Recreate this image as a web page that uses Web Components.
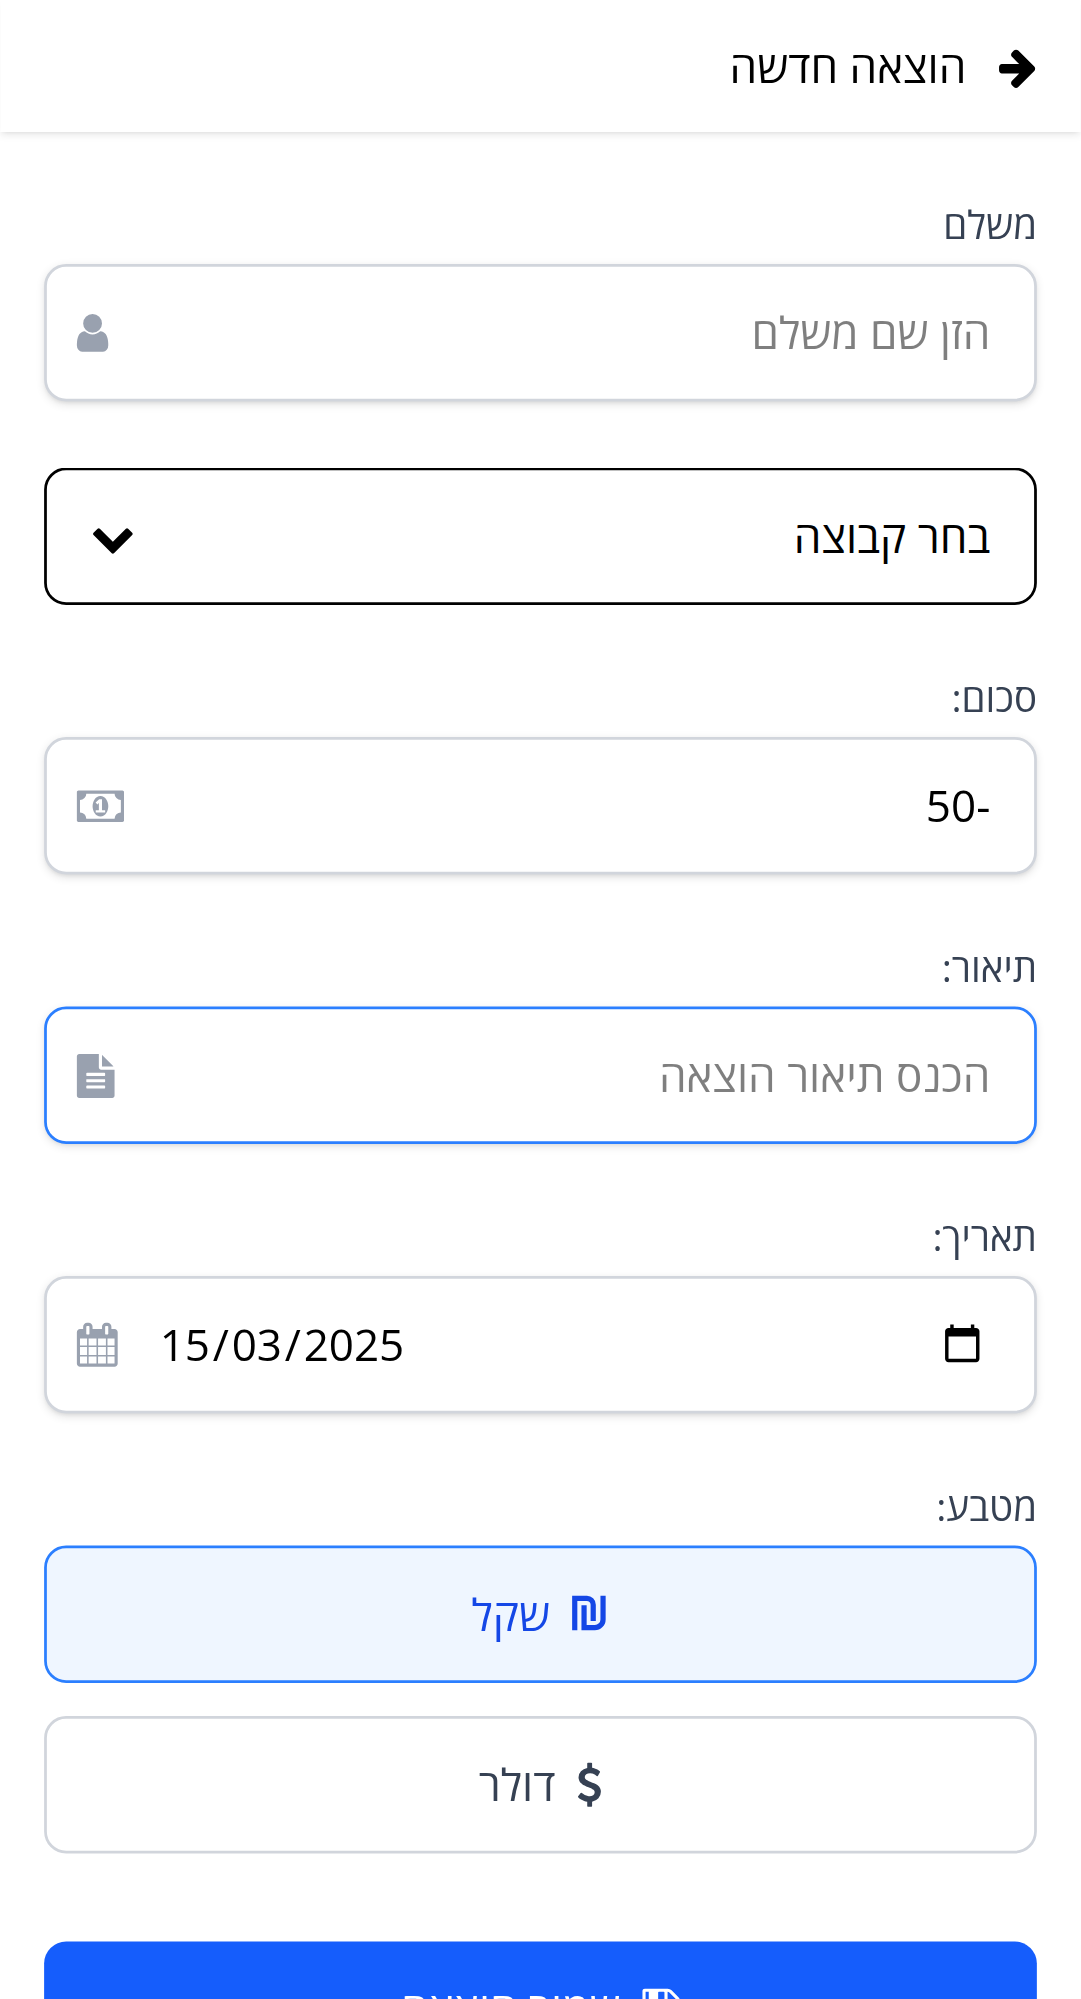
<!DOCTYPE html>
<html lang="he" dir="rtl">
<head>
<meta charset="utf-8">
<title>הוצאה חדשה</title>
<style>
html, body { margin: 0; padding: 0; overflow: hidden; background: #fff; height: 100%; }
expense-page { font-family: "Open Sans", "Noto Sans", sans-serif; font-size: 16px; line-height: 24px; color: #000; }
</style>
</head>
<body>
<expense-page>
  <page-header slot="header"><fa-icon name="arrow"></fa-icon><page-title>הוצאה חדשה</page-title></page-header>
  <form-field label="משלם"><input-box icon="user" muted>הזן שם משלם</input-box></form-field>
  <group-select>בחר קבוצה</group-select>
  <form-field label="סכום:"><input-box icon="money">-50</input-box></form-field>
  <form-field label="תיאור:"><input-box icon="file" muted focused>הכנס תיאור הוצאה</input-box></form-field>
  <form-field label="תאריך:"><input-box icon="calendar"><date-value day="15" month="03" year="2025"></date-value></input-box></form-field>
  <form-field label="מטבע:">
    <currency-option icon="shekel" selected>שקל</currency-option>
    <currency-option icon="dollar">דולר</currency-option>
  </form-field>
  <save-button>שמור הוצאה</save-button>
</expense-page>
<script>
const ICONS = {
  arrow: ['100 -50 1536 1792', '<path d="M1600 960q0 54-37 91l-651 651q-39 37-91 37-51 0-90-37l-75-75q-38-38-38-91t38-91l293-293h-704q-52 0-84.5-37.5t-32.5-90.5v-128q0-53 32.5-90.5t84.5-37.5h704l-293-294q-38-36-38-90t38-90l75-75q38-38 90-38 53 0 91 38l651 651q37 35 37 90z"/>'],
  user: ['266 -5 1280 1792', '<path d="M1536 1399q0 109-62.5 187t-150.5 78h-854q-88 0-150.5-78t-62.5-187q0-85 8.5-160.5t31.5-152 58.5-131 94-89 134.5-34.5q131 128 313 128t313-128q76 0 134.5 34.5t94 89 58.5 131 31.5 152 8.5 160.5zm-256-887q0 159-112.5 271.5t-271.5 112.5-271.5-112.5-112.5-271.5 112.5-271.5 271.5-112.5 271.5 112.5 112.5 271.5z"/>'],
  chevron: ['0 -40 1792 1792', '<path d="M1683 808l-742 741q-19 19-45 19t-45-19l-742-741q-19-19-19-45.5t19-45.5l166-165q19-19 45-19t45 19l531 531 531-531q19-19 45-19t45 19l166 165q19 19 19 45.5t-19 45.5z"/>'],
  money: ['10 -20 1920 1792', '<path d="M768 1152h384v-96h-128v-448h-114l-148 137 77 80q42-37 55-57h2v288h-128v96zm512-256q0 70-21 142t-59.5 134-101.5 101-138 39-138-39-101.5-101-59.5-134-21-142 21-142 59.5-134 101.5-101 138-39 138 39 101.5 101 59.5 134 21 142zm512 256v-512q-106 0-181-75t-75-181h-1152q0 106-75 181t-181 75v512q106 0 181 75t75 181h1152q0-106 75-181t181-75zm128-832v1152q0 26-19 45t-45 19h-1792q-26 0-45-19t-19-45v-1152q0-26 19-45t45-19h1792q26 0 45 19t19 45z"/>'],
  file: ['138 -30 1536 1792', '<path d="M1596 476q14 14 28 36h-472v-472q22 14 36 28zm-476 164h544v1056q0 40-28 68t-68 28h-1344q-40 0-68-28t-28-68v-1600q0-40 28-68t68-28h800v544q0 40 28 68t68 28zm160 736v-64q0-14-9-23t-23-9h-704q-14 0-23 9t-9 23v64q0 14 9 23t23 9h704q14 0 23-9t9-23zm0-256v-64q0-14-9-23t-23-9h-704q-14 0-23 9t-9 23v64q0 14 9 23t23 9h704q14 0 23-9t9-23zm0-256v-64q0-14-9-23t-23-9h-704q-14 0-23 9t-9 23v64q0 14 9 23t23 9h704q14 0 23-9t9-23z"/>'],
  calendar: ['74 0 1664 1792', '<path d="M192 1664h288v-288h-288v288zm352 0h320v-288h-320v288zm-352-352h288v-320h-288v320zm352 0h320v-320h-320v320zm-352-384h288v-288h-288v288zm736 736h320v-288h-320v288zm-384-736h320v-288h-320v288zm768 736h288v-288h-288v288zm-384-352h320v-320h-320v320zm-352-864v-288q0-13-9.5-22.5t-22.5-9.5h-64q-13 0-22.5 9.5t-9.5 22.5v288q0 13 9.5 22.5t22.5 9.5h64q13 0 22.5-9.5t9.5-22.5zm736 864h288v-320h-288v320zm-384-384h320v-288h-320v288zm384 0h288v-288h-288v288zm32-480v-288q0-13-9.5-22.5t-22.5-9.5h-64q-13 0-22.5 9.5t-9.5 22.5v288q0 13 9.5 22.5t22.5 9.5h64q13 0 22.5-9.5t9.5-22.5zm384-64v1280q0 52-38 90t-90 38h-1408q-52 0-90-38t-38-90v-1280q0-52 38-90t90-38h128v-96q0-66 47-113t113-47h64q66 0 113 47t47 113v96h384v-96q0-66 47-113t113-47h64q66 0 113 47t47 113v96h128q52 0 90 38t38 90z"/>'],
  dollar: ['30 0 1024 1792', '<path d="M978 1185q0 153-99.5 263.5t-258.5 136.5v175q0 14-9 23t-23 9h-135q-13 0-22.5-9.5t-9.5-22.5v-175q-66-9-127.5-31t-101.5-44.5-74-48-46.5-37.5-17.5-18q-17-21-2-41l103-135q7-10 23-12 15-2 24 9l2 2q113 99 243 125 37 8 74 8 81 0 142.5-43t61.5-122q0-28-15-53t-33.5-42-58.5-37.5-66-32-80-32.5q-39-16-61.5-25t-61.5-26.5-62.5-31-56.5-35.5-53.5-42.5-43.5-49-35.5-58-21-66.5-8.5-78q0-138 98-242t255-134v-180q0-13 9.5-22.5t22.5-9.5h135q14 0 23 9t9 23v176q57 6 110.5 23t87 33.5 63.5 37.5 39 29 15 14q17 18 5 38l-81 146q-8 15-23 16-14 3-27-7-3-3-14.5-12t-39-26.5-58.5-32-74.5-26-85.5-11.5q-95 0-155 43t-60 111q0 26 8.5 48t29.5 41.5 39.5 33 56 31 60.5 27 70 27.5q53 20 81 31.5t76 35 75.5 42.5 62 50 53 63.5 31.5 76.5 13 94z"/>'],
  shekel: ['84 116 1536 1792', '<g fill="none" stroke="currentColor" stroke-width="212"><path d="M191 1662V364H680A260 260 0 0 1 944 624V1290"/><path d="M571 650V1556H1010A335 335 0 0 0 1345 1221V258"/></g>'],
  save: ['175 0 1536 1792', '<path d="M512 1536h768v-384h-768v384zm896 0h128v-896q0-14-10-38.5t-20-34.5l-281-281q-10-10-34-20t-39-10v416q0 40-28 68t-68 28h-576q-40 0-68-28t-28-68v-416h-128v1280h128v-416q0-40 28-68t68-28h832q40 0 68 28t28 68v416zm-384-928v-320q0-13-9.5-22.5t-22.5-9.5h-192q-13 0-22.5 9.5t-9.5 22.5v320q0 13 9.5 22.5t22.5 9.5h192q13 0 22.5-9.5t9.5-22.5zm640 32v928q0 40-28 68t-68 28h-1344q-40 0-68-28t-28-68v-1344q0-40 28-68t68-28h928q40 0 88 20t76 48l280 280q28 28 48 76t20 88z"/>'],
  picker: ['-.6 0 24 24', '<path d="M20 3h-1V1h-2v2H7V1H5v2H4c-1.1 0-2 .9-2 2v16c0 1.1.9 2 2 2h16c1.1 0 2-.9 2-2V5c0-1.1-.9-2-2-2zm0 18H4V8h16v13z"/>']
};

function define(name, render) {
  customElements.define(name, class extends HTMLElement {
    constructor() { super(); this.attachShadow({ mode: 'open' }); }
    connectedCallback() { this.shadowRoot.innerHTML = render(this); }
  });
}

define('fa-icon', el => {
  const [box, body] = ICONS[el.getAttribute('name')];
  return `<style>:host{display:block;flex:none;height:16px}:host([name=picker]){height:15px}svg{display:block;height:100%;width:auto;fill:currentColor;overflow:visible}</style><svg viewBox="${box}">${body}</svg>`;
});

// The app is laid out on a 393px wide phone viewport and enlarged to its pixel density.
define('expense-page', () => `<style>
  :host{display:block;width:393.09px;height:726.9px;overflow:hidden;direction:rtl;transform:scale(2.75);transform-origin:100% 0}
  main{display:flex;flex-direction:column;gap:24px;padding:24px 16px}
</style><slot name="header"></slot><main><slot></slot></main>`);

define('page-header', () => `<style>
  :host{display:flex;align-items:center;gap:12px;height:48px;padding:0 16px;box-sizing:border-box;background:#fff;
    box-shadow:0 1px 3px rgba(0,0,0,.1),0 1px 2px -1px rgba(0,0,0,.1)}
</style><slot></slot>`);

define('page-title', () => `<style>:host{display:block}</style><slot></slot>`);

define('form-field', el => `<style>
  :host{display:flex;flex-direction:column}
  .label{font-size:14px;line-height:20px;color:#364153;margin-bottom:4px}
  .body{display:flex;flex-direction:column;gap:12px}
</style><div class="label">${el.getAttribute('label')}</div><div class="body"><slot></slot></div>`);

define('input-box', el => `<style>
  :host{display:flex;align-items:center;justify-content:space-between;height:50px;box-sizing:border-box;
    border:1px solid #d1d5dc;border-radius:8px;padding:0 16px 0 10.9px;background:#fff;
    box-shadow:0 1px 3px rgba(0,0,0,.1),0 1px 2px -1px rgba(0,0,0,.1)}
  :host([focused]){border-color:#2b7fff}
  :host([muted]) .value{color:rgba(0,0,0,.5)}
  .value{flex:1}
  fa-icon{color:#99a1af;margin-top:.4px}
</style><div class="value"><slot></slot></div><fa-icon name="${el.getAttribute('icon')}"></fa-icon>`);

define('date-value', el => `<style>
  :host{display:flex;align-items:center;justify-content:space-between;padding:0 3px 0 14.8px}
  fa-icon{margin-bottom:1.2px}
  .date{display:flex;direction:ltr}
  .date span{padding:0 .5px}
</style><fa-icon name="picker"></fa-icon><div class="date"><span>${el.getAttribute('day')}</span><span>/</span><span>${el.getAttribute('month')}</span><span>/</span><span>${el.getAttribute('year')}</span></div>`);

define('group-select', () => `<style>
  :host{display:flex;align-items:center;justify-content:space-between;height:50px;box-sizing:border-box;
    border:1px solid #000;border-radius:8px;padding:0 16px;background:#fff}
</style><span><slot></slot></span><fa-icon name="chevron"></fa-icon>`);

define('currency-option', el => `<style>
  :host{display:flex;align-items:center;justify-content:center;gap:8px;height:50px;box-sizing:border-box;
    border:1px solid #d1d5dc;border-radius:8px;background:#fff;color:#364153}
  :host([selected]){border-color:#2b7fff;background:#eff6ff;color:#1447e6}
</style><fa-icon name="${el.getAttribute('icon')}"></fa-icon><span><slot></slot></span>`);

define('save-button', () => `<style>
  :host{display:flex;align-items:center;justify-content:center;gap:8px;height:48px;margin-top:8px;border-radius:8px;background:#155dfc;color:#fff;font-weight:500}
</style><fa-icon name="save"></fa-icon><span><slot></slot></span>`);
</script>
</body>
</html>
